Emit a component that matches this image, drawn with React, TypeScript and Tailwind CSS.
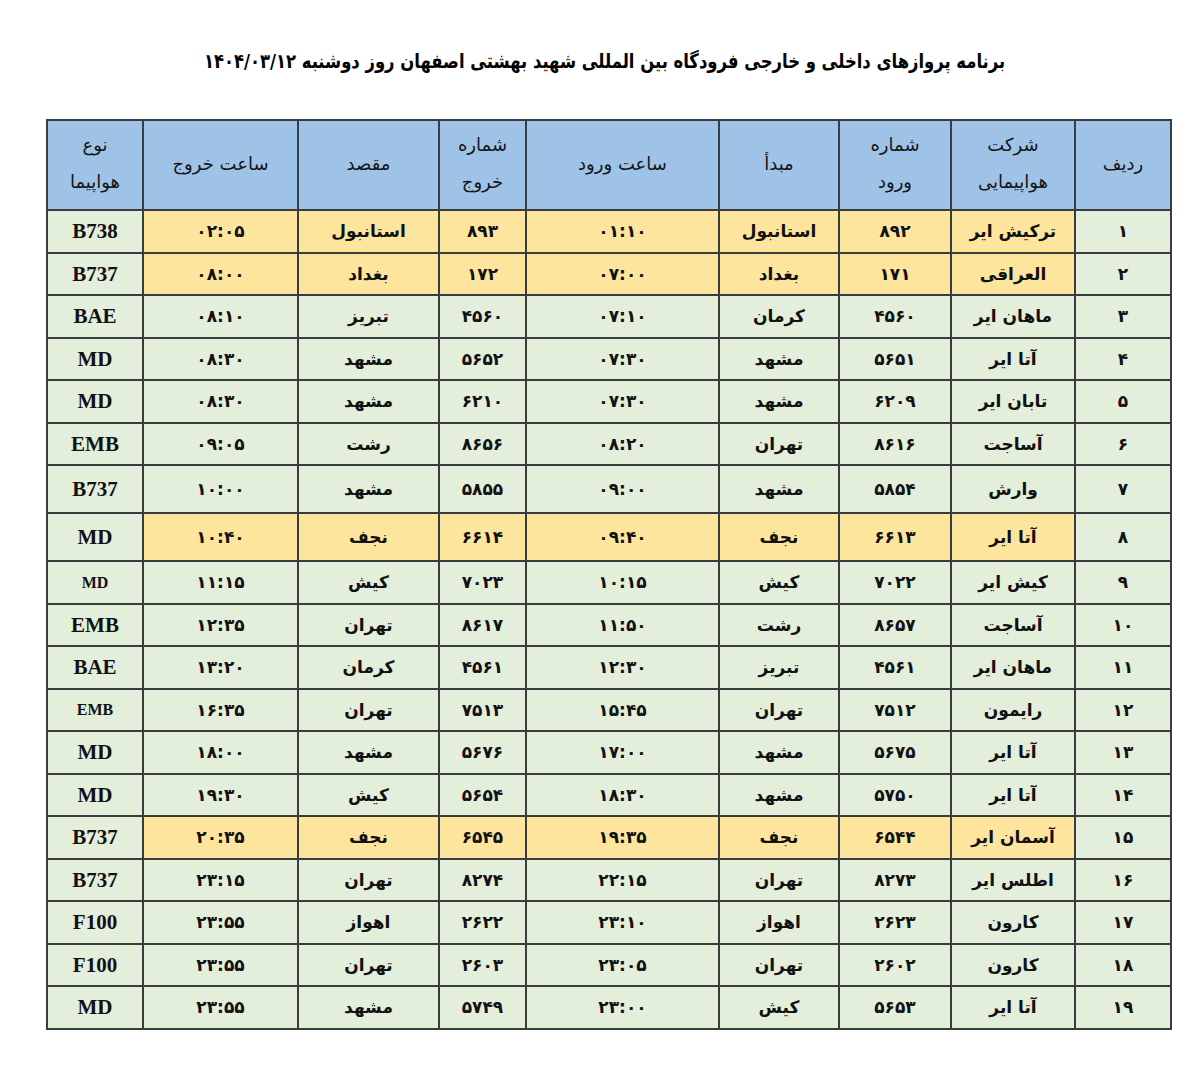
import React from 'react'

type Row = {
  n: string
  airline: string
  inNo: string
  from: string
  inTime: string
  outNo: string
  to: string
  outTime: string
  type: string
  hi?: boolean
  tall?: boolean
  small?: boolean
}

const rows: Row[] = [
  { n: '۱', airline: 'ترکیش ایر', inNo: '۸۹۲', from: 'استانبول', inTime: '۰۱:۱۰', outNo: '۸۹۳', to: 'استانبول', outTime: '۰۲:۰۵', type: 'B738', hi: true },
  { n: '۲', airline: 'العراقی', inNo: '۱۷۱', from: 'بغداد', inTime: '۰۷:۰۰', outNo: '۱۷۲', to: 'بغداد', outTime: '۰۸:۰۰', type: 'B737', hi: true },
  { n: '۳', airline: 'ماهان ایر', inNo: '۴۵۶۰', from: 'کرمان', inTime: '۰۷:۱۰', outNo: '۴۵۶۰', to: 'تبریز', outTime: '۰۸:۱۰', type: 'BAE' },
  { n: '۴', airline: 'آتا ایر', inNo: '۵۶۵۱', from: 'مشهد', inTime: '۰۷:۳۰', outNo: '۵۶۵۲', to: 'مشهد', outTime: '۰۸:۳۰', type: 'MD' },
  { n: '۵', airline: 'تابان ایر', inNo: '۶۲۰۹', from: 'مشهد', inTime: '۰۷:۳۰', outNo: '۶۲۱۰', to: 'مشهد', outTime: '۰۸:۳۰', type: 'MD' },
  { n: '۶', airline: 'آساجت', inNo: '۸۶۱۶', from: 'تهران', inTime: '۰۸:۲۰', outNo: '۸۶۵۶', to: 'رشت', outTime: '۰۹:۰۵', type: 'EMB' },
  { n: '۷', airline: 'وارش', inNo: '۵۸۵۴', from: 'مشهد', inTime: '۰۹:۰۰', outNo: '۵۸۵۵', to: 'مشهد', outTime: '۱۰:۰۰', type: 'B737', tall: true },
  { n: '۸', airline: 'آتا ایر', inNo: '۶۶۱۳', from: 'نجف', inTime: '۰۹:۴۰', outNo: '۶۶۱۴', to: 'نجف', outTime: '۱۰:۴۰', type: 'MD', hi: true, tall: true },
  { n: '۹', airline: 'کیش ایر', inNo: '۷۰۲۲', from: 'کیش', inTime: '۱۰:۱۵', outNo: '۷۰۲۳', to: 'کیش', outTime: '۱۱:۱۵', type: 'MD', small: true },
  { n: '۱۰', airline: 'آساجت', inNo: '۸۶۵۷', from: 'رشت', inTime: '۱۱:۵۰', outNo: '۸۶۱۷', to: 'تهران', outTime: '۱۲:۳۵', type: 'EMB' },
  { n: '۱۱', airline: 'ماهان ایر', inNo: '۴۵۶۱', from: 'تبریز', inTime: '۱۲:۳۰', outNo: '۴۵۶۱', to: 'کرمان', outTime: '۱۳:۲۰', type: 'BAE' },
  { n: '۱۲', airline: 'رایمون', inNo: '۷۵۱۲', from: 'تهران', inTime: '۱۵:۴۵', outNo: '۷۵۱۳', to: 'تهران', outTime: '۱۶:۳۵', type: 'EMB', small: true },
  { n: '۱۳', airline: 'آتا ایر', inNo: '۵۶۷۵', from: 'مشهد', inTime: '۱۷:۰۰', outNo: '۵۶۷۶', to: 'مشهد', outTime: '۱۸:۰۰', type: 'MD' },
  { n: '۱۴', airline: 'آتا ایر', inNo: '۵۷۵۰', from: 'مشهد', inTime: '۱۸:۳۰', outNo: '۵۶۵۴', to: 'کیش', outTime: '۱۹:۳۰', type: 'MD' },
  { n: '۱۵', airline: 'آسمان ایر', inNo: '۶۵۴۴', from: 'نجف', inTime: '۱۹:۳۵', outNo: '۶۵۴۵', to: 'نجف', outTime: '۲۰:۳۵', type: 'B737', hi: true },
  { n: '۱۶', airline: 'اطلس ایر', inNo: '۸۲۷۳', from: 'تهران', inTime: '۲۲:۱۵', outNo: '۸۲۷۴', to: 'تهران', outTime: '۲۳:۱۵', type: 'B737' },
  { n: '۱۷', airline: 'کارون', inNo: '۲۶۲۳', from: 'اهواز', inTime: '۲۳:۱۰', outNo: '۲۶۲۲', to: 'اهواز', outTime: '۲۳:۵۵', type: 'F100' },
  { n: '۱۸', airline: 'کارون', inNo: '۲۶۰۲', from: 'تهران', inTime: '۲۳:۰۵', outNo: '۲۶۰۳', to: 'تهران', outTime: '۲۳:۵۵', type: 'F100' },
  { n: '۱۹', airline: 'آتا ایر', inNo: '۵۶۵۳', from: 'کیش', inTime: '۲۳:۰۰', outNo: '۵۷۴۹', to: 'مشهد', outTime: '۲۳:۵۵', type: 'MD' },
]

const headers: string[][] = [
  ['ردیف'],
  ['شرکت', 'هواپیمایی'],
  ['شماره', 'ورود'],
  ['مبدأ'],
  ['ساعت ورود'],
  ['شماره', 'خروج'],
  ['مقصد'],
  ['ساعت خروج'],
  ['نوع', 'هواپیما'],
]

const fa = "font-['DejaVu_Sans',sans-serif]"

export default function App() {
  return (
    <div className="w-[1203px] min-h-[1079px] bg-white pt-[46px]">
      <div className="flex justify-center pl-[6px]">
        <h1
          dir="rtl"
          className={`${fa} inline-block scale-x-[0.82] whitespace-nowrap text-[20px] font-bold text-black tracking-[-0.4px]`}
        >
          برنامه پروازهای داخلی و خارجی فرودگاه بین المللی شهید بهشتی اصفهان روز  دوشنبه ۱۴۰۴/۰۳/۱۲
        </h1>
      </div>

      <table dir="rtl" className="ml-[46px] mt-[43px] w-[1124px] table-fixed border-collapse">
        <colgroup>
          <col className="w-[96px]" />
          <col className="w-[124px]" />
          <col className="w-[112px]" />
          <col className="w-[120px]" />
          <col className="w-[193px]" />
          <col className="w-[87px]" />
          <col className="w-[141px]" />
          <col className="w-[155px]" />
          <col className="w-[96px]" />
        </colgroup>
        <thead>
          <tr className="h-[90px] bg-[#9fc3e7]">
            {headers.map((h, i) => (
              <th key={i} className={`${fa} border-2 border-[#3a3d40] pb-[4px] text-center align-middle text-[18px] font-normal leading-[37px] text-[#151515]`}>
                {h.map((l, j) => (
                  <div key={j}>{l}</div>
                ))}
              </th>
            ))}
          </tr>
        </thead>
        <tbody>
          {rows.map(r => {
            const mid = r.hi ? 'bg-[#fee59d]' : 'bg-[#e3eedb]'
            const cell = `border-2 border-[#3a3d40] pt-[1px] text-center align-middle`
            const txt = `${fa} text-[17px] font-bold text-[#111]`
            return (
              <tr key={r.n} className={r.tall ? 'h-[48px]' : 'h-[42.5px]'}>
                <td className={`${cell} ${txt} bg-[#e3eedb]`}>{r.n}</td>
                <td className={`${cell} ${txt} ${mid}`}>{r.airline}</td>
                <td className={`${cell} ${txt} ${mid}`}>{r.inNo}</td>
                <td className={`${cell} ${txt} ${mid}`}>{r.from}</td>
                <td className={`${cell} ${txt} ${mid}`}>{r.inTime}</td>
                <td className={`${cell} ${txt} ${mid}`}>{r.outNo}</td>
                <td className={`${cell} ${txt} ${mid}`}>{r.to}</td>
                <td className={`${cell} ${txt} ${mid}`}>{r.outTime}</td>
                <td
                  dir="ltr"
                  className={`${cell} bg-[#e3eedb] font-['Liberation_Serif',serif] font-bold text-[#111] ${r.small ? 'text-[16px]' : 'text-[21px]'}`}
                >
                  {r.type}
                </td>
              </tr>
            )
          })}
        </tbody>
      </table>
    </div>
  )
}
